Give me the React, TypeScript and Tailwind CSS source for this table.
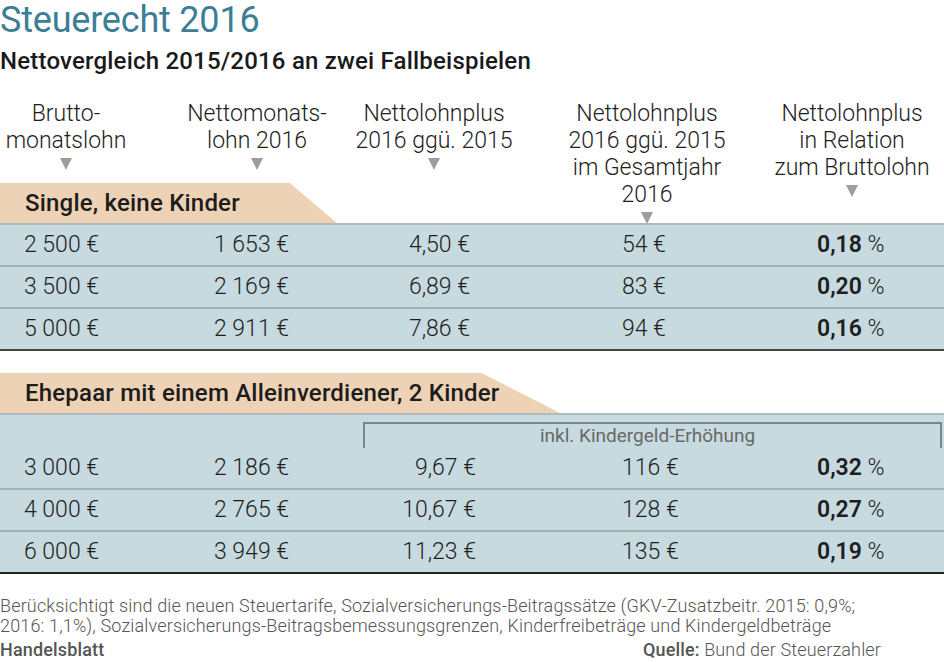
import React from "react";

type Row = { brutto: string; netto: string; plus: string; jahr: string; rel: string };

const single: Row[] = [
  { brutto: "2 500 €", netto: "1 653 €", plus: "4,50 €", jahr: "54 €", rel: "0,18" },
  { brutto: "3 500 €", netto: "2 169 €", plus: "6,89 €", jahr: "83 €", rel: "0,20" },
  { brutto: "5 000 €", netto: "2 911 €", plus: "7,86 €", jahr: "94 €", rel: "0,16" },
];

const ehepaar: Row[] = [
  { brutto: "3 000 €", netto: "2 186 €", plus: "9,67 €", jahr: "116 €", rel: "0,32" },
  { brutto: "4 000 €", netto: "2 765 €", plus: "10,67 €", jahr: "128 €", rel: "0,27" },
  { brutto: "6 000 €", netto: "3 949 €", plus: "11,23 €", jahr: "135 €", rel: "0,19" },
];

const Marker = () => (
  <svg width="12" height="12" viewBox="0 0 12 12" className="mt-[4px] shrink-0">
    <polygon points="0,0 12,0 6,12" fill="#9d9d9d" />
  </svg>
);

const HeaderCell = ({ lines, className = "" }: { lines: string[]; className?: string }) => (
  <div className={`flex flex-col items-center ${className}`}>
    {lines.map((l) => (
      <span key={l} className="whitespace-nowrap leading-[27px]">
        {l}
      </span>
    ))}
    <Marker />
  </div>
);

const Tab = ({ label, width }: { label: string; width: string }) => (
  <div
    className={`${width} h-[40px] bg-[#eed2b5] pl-[25px] flex items-center text-[24px] tracking-[0.2px] font-medium text-[#1c1c1c] [clip-path:polygon(0_0,86%_0,100%_100%,0_100%)]`}
  >
    {label}
  </div>
);

// wide = first group (plus column ends a little further left)
const DataRow = ({ row, wide, divider }: { row: Row; wide: boolean; divider: boolean }) => (
  <div
    className={`flex items-center pl-[24px] ${divider ? "h-[42px] border-t-2 border-[#a3b1b5]" : "h-[40px]"}`}
  >
    <div className="w-[190px]">{row.brutto}</div>
    <div className="w-[150px]">{row.netto}</div>
    <div className={`${wide ? "w-[106px]" : "w-[112px]"} text-right`}>{row.plus}</div>
    <div className={wide ? "w-[347px] pl-[152px]" : "w-[341px] pl-[146px]"}>{row.jahr}</div>
    <div>
      <span className="font-semibold">{row.rel}</span> %
    </div>
  </div>
);

export default function App() {
  return (
    <div className="w-[944px] h-[662px] bg-white font-['Roboto',sans-serif] text-[#1e1e1e] overflow-hidden">
      <h1 className="text-[36px] leading-[40px] text-[#3b7e96] tracking-[-0.2px]">Steuerecht 2016</h1>
      <h2 className="mt-[8px] text-[24px] leading-[26px] tracking-[0.2px] font-medium text-[#1a1a1a]">
        Nettovergleich 2015/2016 an zwei Fallbeispielen
      </h2>

      <div className="mt-[26px] grid grid-cols-[132px_250px_104px_322px_1fr] grid-rows-[auto_auto] font-light text-[23px]">
        <HeaderCell lines={["Brutto-", "monatslohn"]} />
        <HeaderCell lines={["Nettomonats-", "lohn 2016"]} />
        <HeaderCell lines={["Nettolohnplus", "2016 ggü. 2015"]} />
        <HeaderCell
          className="row-span-2 -mb-[1px]"
          lines={["Nettolohnplus", "2016 ggü. 2015", "im Gesamtjahr", "2016"]}
        />
        <div className="row-span-2 flex justify-start">
          <HeaderCell className="w-[88px]" lines={["Nettolohnplus", "in Relation", "zum Bruttolohn"]} />
        </div>
        <div className="col-span-3 mt-[13px] self-end">
          <Tab label="Single, keine Kinder" width="w-[337px]" />
        </div>
      </div>

      <div className="bg-[#c7dadf] border-t-2 border-[#b1babd] border-b-2 border-b-[#454545] font-light text-[23px]">
        {single.map((r, i) => (
          <DataRow key={r.brutto} row={r} wide divider={i > 0} />
        ))}
      </div>

      <div className="mt-[22px]">
        <Tab label="Ehepaar mit einem Alleinverdiener, 2 Kinder" width="w-[560px]" />
      </div>
      <div className="bg-[#c7dadf] border-t-2 border-[#b1babd] border-b-2 border-b-[#222] font-light text-[23px]">
        <div className="h-[33px] pt-[7px]">
          <div className="ml-[363px] mr-[2px] h-[26px] border-t-2 border-x-2 border-[#7d8587] pr-[10px] text-center text-[19px] leading-[24px] font-normal text-[#686868]">
            inkl. Kindergeld-Erhöhung
          </div>
        </div>
        {ehepaar.map((r, i) => (
          <DataRow key={r.brutto} row={r} wide={false} divider={i > 0} />
        ))}
      </div>

      <div className="mt-[22px] text-[18px] leading-[20px] tracking-[0.15px] font-light text-[#555]">
        <p>
          Berücksichtigt sind die neuen Steuertarife, Sozialversicherungs-Beitragssätze (GKV-Zusatzbeitr. 2015: 0,9%;
        </p>
        <p>2016: 1,1%), Sozialversicherungs-Beitragsbemessungsgrenzen, Kinderfreibeträge und Kindergeldbeträge</p>
        <div className="mt-[4px] flex justify-between pr-[63px]">
          <span className="font-medium">Handelsblatt</span>
          <span>
            <span className="font-medium">Quelle:</span> Bund der Steuerzahler
          </span>
        </div>
      </div>
    </div>
  );
}
